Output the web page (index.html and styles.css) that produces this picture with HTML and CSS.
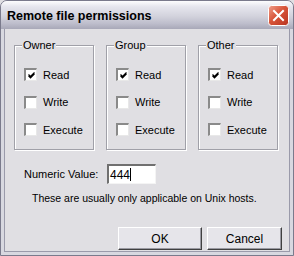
FILE: index.html
```html
<!DOCTYPE html>
<html>
<head>
<meta charset="utf-8">
<link rel="stylesheet" href="styles.css">
</head>
<body>
<div class="window">
  <div class="titlebar">
    <span class="title">Remote file permissions</span>
    <span class="close">
      <svg width="21" height="21" viewBox="0 0 21 21">
        <defs>
          <linearGradient id="cg" x1="0" y1="0" x2="1" y2="1">
            <stop offset="0" stop-color="#f0a08c"/>
            <stop offset="0.45" stop-color="#d8553a"/>
            <stop offset="1" stop-color="#b83420"/>
          </linearGradient>
        </defs>
        <rect x="0.5" y="0.5" width="20" height="20" rx="3" fill="url(#cg)" stroke="#ffffff"/>
        <path d="M6 6 L15 15 M15 6 L6 15" stroke="#ffffff" stroke-width="2" stroke-linecap="square"/>
      </svg>
    </span>
  </div>
  <div class="client">
    <div class="groups">
      <div class="group">
        <div class="gtitle">Owner</div>
        <div class="opts">
          <label class="opt"><span class="cb"><svg width="9" height="9" viewBox="0 0 9 9"><path d="M1.5 3.5 L3.5 5.5 L7.5 1.5 M1.5 4.8 L3.5 6.8 L7.5 2.8" stroke="#000" stroke-width="1.2" fill="none"/></svg></span>Read</label>
          <label class="opt"><span class="cb"></span>Write</label>
          <label class="opt"><span class="cb"></span>Execute</label>
        </div>
      </div>
      <div class="group">
        <div class="gtitle">Group</div>
        <div class="opts">
          <label class="opt"><span class="cb"><svg width="9" height="9" viewBox="0 0 9 9"><path d="M1.5 3.5 L3.5 5.5 L7.5 1.5 M1.5 4.8 L3.5 6.8 L7.5 2.8" stroke="#000" stroke-width="1.2" fill="none"/></svg></span>Read</label>
          <label class="opt"><span class="cb"></span>Write</label>
          <label class="opt"><span class="cb"></span>Execute</label>
        </div>
      </div>
      <div class="group">
        <div class="gtitle">Other</div>
        <div class="opts">
          <label class="opt"><span class="cb"><svg width="9" height="9" viewBox="0 0 9 9"><path d="M1.5 3.5 L3.5 5.5 L7.5 1.5 M1.5 4.8 L3.5 6.8 L7.5 2.8" stroke="#000" stroke-width="1.2" fill="none"/></svg></span>Read</label>
          <label class="opt"><span class="cb"></span>Write</label>
          <label class="opt"><span class="cb"></span>Execute</label>
        </div>
      </div>
    </div>
    <div class="numeric">
      <span class="numlabel">Numeric Value:</span>
      <span class="input">444<span class="caret"></span></span>
    </div>
    <div class="hint">These are usually only applicable on Unix hosts.</div>
    <div class="buttons">
      <span class="btn ok">OK</span>
      <span class="btn cancel">Cancel</span>
    </div>
  </div>
</div>
</body>
</html>
```
FILE: styles.css
```css
html, body {
  margin: 0;
  padding: 0;
  width: 294px;
  height: 256px;
  overflow: hidden;
  background: #e0dfe3;
}
.window {
  box-sizing: border-box;
  width: 294px;
  height: 256px;
  display: flex;
  flex-direction: column;
  background: #d8d8e0;
  border: 1px solid #7a7a8c;
  border-radius: 7px 7px 0 0;
  padding: 0 3px 3px 3px;
  font-family: "Liberation Sans", Arial, sans-serif;
  font-size: 11px;
  color: #000;
}
.titlebar {
  height: 28px;
  flex: none;
  display: flex;
  align-items: center;
  justify-content: space-between;
  margin: 0 -3px;
  padding: 0 4px 0 6px;
  border-radius: 6px 6px 0 0;
  background: linear-gradient(to bottom, #fdfdfe 0%, #e6e6ee 20%, #d2d2dc 55%, #bebecc 80%, #a8a8b8 100%);
}
.title {
  font-weight: bold;
  font-size: 12.5px;
  color: #000;
  padding-top: 1px;
}
.close {
  display: flex;
  width: 21px;
  height: 21px;
  margin-top: 1px;
}
.client {
  flex: 1;
  display: flex;
  flex-direction: column;
  background: #e0dfe3;
  border-left: 1px solid #9a9aaa;
  border-right: 1px solid #9a9aaa;
  border-bottom: 1px solid #9a9aaa;
  padding: 16px 0 0 9px;
}
.groups {
  display: flex;
  gap: 12px;
}
.group {
  box-sizing: border-box;
  width: 80px;
  padding: 0 0 13px 7px;
  border: 1px solid #a0a0a8;
  box-shadow: 1px 1px 0 #ffffff, inset 1px 1px 0 #ffffff;
}
.gtitle {
  width: fit-content;
  margin-top: -7px;
  padding: 0 1px;
  line-height: 13px;
  background: #e0dfe3;
}
.opts {
  display: flex;
  flex-direction: column;
  gap: 14.5px;
  margin-top: 16px;
}
.opt {
  display: flex;
  align-items: center;
  height: 13px;
  margin-left: 2px;
  gap: 6px;
}
.cb {
  box-sizing: border-box;
  width: 13px;
  height: 13px;
  background: #ffffff;
  border-top: 2px solid #8a8a8a;
  border-left: 2px solid #8a8a8a;
  border-right: 1px solid #e8e8e8;
  border-bottom: 1px solid #e8e8e8;
  display: flex;
  align-items: center;
  justify-content: center;
}
.cb svg {
  display: block;
}
.numeric {
  display: flex;
  align-items: center;
  margin-top: 14px;
  margin-left: 10px;
  height: 20px;
}
.numlabel {
  width: 83px;
}
.input {
  box-sizing: border-box;
  width: 49px;
  height: 20px;
  background: #ffffff;
  border-top: 2px solid #707070;
  border-left: 2px solid #707070;
  border-right: 1px solid #f4f4f4;
  border-bottom: 1px solid #f4f4f4;
  display: flex;
  align-items: center;
  padding-left: 1px;
  font-size: 12px;
}
.caret {
  display: inline-block;
  width: 1px;
  height: 13px;
  background: #000;
}
.hint {
  margin-top: 8px;
  margin-left: 18px;
  line-height: 13px;
  font-size: 10.5px;
}
.buttons {
  display: flex;
  justify-content: flex-end;
  gap: 5px;
  margin-top: 22px;
  padding-right: 7px;
}
.btn {
  box-sizing: border-box;
  height: 23px;
  display: flex;
  align-items: center;
  justify-content: center;
  background: #e6e5ea;
  border-top: 1px solid #ffffff;
  border-left: 1px solid #ffffff;
  border-right: 1px solid #404040;
  border-bottom: 1px solid #404040;
  box-shadow: inset -1px -1px 0 #9a9aa2;
  font-size: 12px;
}
.ok {
  width: 84px;
}
.cancel {
  width: 75px;
}
```
